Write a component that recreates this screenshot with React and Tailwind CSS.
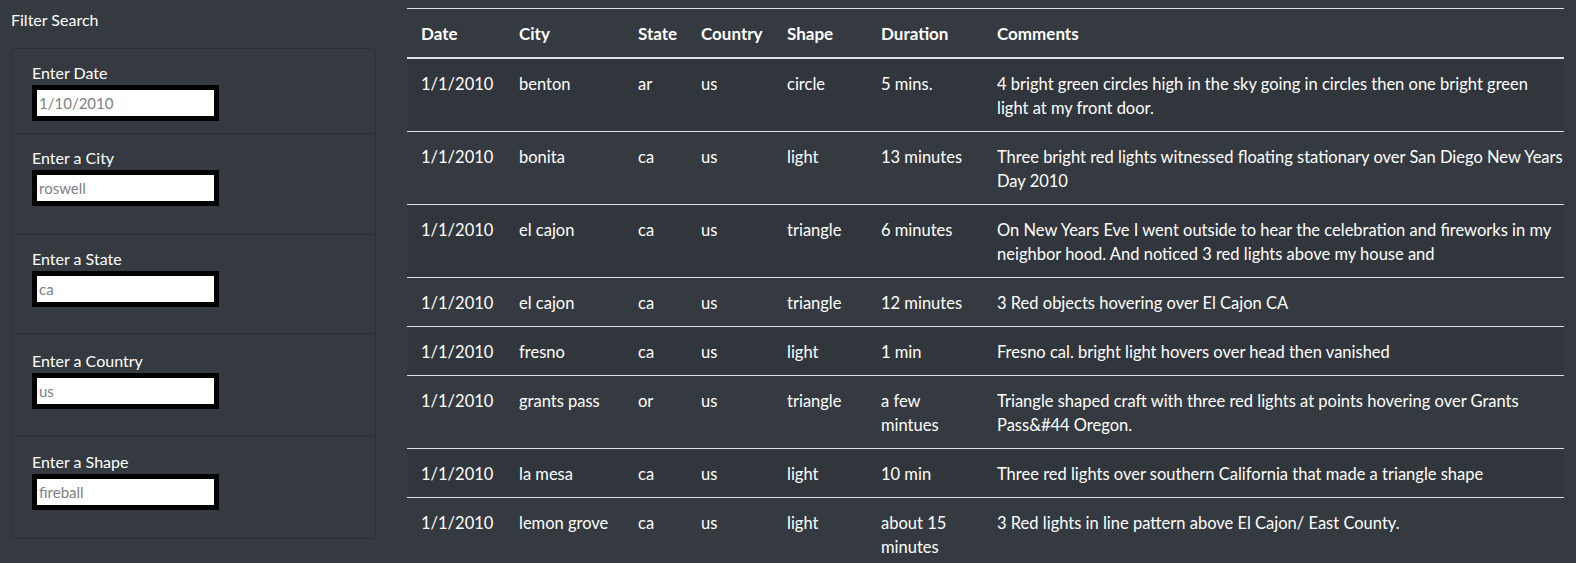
import React from "react";

const filters = [
  { label: "Enter Date", ph: "1/10/2010", h: "h-[85px]", pt: "pt-3" },
  { label: "Enter a City", ph: "roswell", h: "h-[101px]", pt: "pt-3" },
  { label: "Enter a State", ph: "ca", h: "h-[99px]", pt: "pt-3" },
  { label: "Enter a Country", ph: "us", h: "h-[103px]", pt: "pt-[15px]" },
  { label: "Enter a Shape", ph: "fireball", h: "h-[101px]", pt: "pt-[13px]" },
];

const rows = [
  ["1/1/2010", "benton", "ar", "us", "circle", ["5 mins."], ["4 bright green circles high in the sky going in circles then one bright green", "light at my front door."]],
  ["1/1/2010", "bonita", "ca", "us", "light", ["13 minutes"], ["Three bright red lights witnessed floating stationary over San Diego New Years", "Day 2010"]],
  ["1/1/2010", "el cajon", "ca", "us", "triangle", ["6 minutes"], ["On New Years Eve I went outside to hear the celebration and fireworks in my", "neighbor hood. And noticed 3 red lights above my house and"]],
  ["1/1/2010", "el cajon", "ca", "us", "triangle", ["12 minutes"], ["3 Red objects hovering over El Cajon CA"]],
  ["1/1/2010", "fresno", "ca", "us", "light", ["1 min"], ["Fresno cal. bright light hovers over head then vanished"]],
  ["1/1/2010", "grants pass", "or", "us", "triangle", ["a few", "mintues"], ["Triangle shaped craft with three red lights at points hovering over Grants", "Pass&#44 Oregon."]],
  ["1/1/2010", "la mesa", "ca", "us", "light", ["10 min"], ["Three red lights over southern California that made a triangle shape"]],
  ["1/1/2010", "lemon grove", "ca", "us", "light", ["about 15", "minutes"], ["3 Red lights in line pattern above El Cajon/ East County."]],
];

const heads = [
  ["Date", "w-[98px]"],
  ["City", "w-[119px]"],
  ["State", "w-[63px]"],
  ["Country", "w-[86px]"],
  ["Shape", "w-[94px]"],
  ["Duration", "w-[116px]"],
  ["Comments", "w-[581px]"],
];

function Lines({ lines }) {
  return lines.map((l, i) => (
    <React.Fragment key={i}>
      {i > 0 && <br />}
      {l}
    </React.Fragment>
  ));
}

export default function App() {
  return (
    <div
      className="min-h-[563px] w-[1576px] overflow-hidden bg-[#343a40] text-white text-[16px] leading-6"
      style={{ fontFamily: "Lato, 'Open Sans', Arial, sans-serif" }}
    >
      <div className="flex">
        <div className="w-[407px] shrink-0 pl-[11px]">
          <div className="pt-[8px] h-[48px] text-[16px] leading-6">Filter Search</div>
          <div className="w-[365px] rounded border border-[#2c3136] flex flex-col">
            {filters.map((f, i) => (
              <div
                key={f.label}
                className={`${f.h} ${f.pt} px-5 ${i < filters.length - 1 ? "border-b border-[#2c3136]" : ""}`}
              >
                <div className="leading-6">{f.label}</div>
                <input
                  placeholder={f.ph}
                  className="block w-[187px] h-[36px] border-[5px] border-black bg-white px-[2px] text-[15px] text-black placeholder:text-[#808080] outline-none"
                  style={{ fontFamily: "Lato, 'Open Sans', Arial, sans-serif" }}
                />
              </div>
            ))}
          </div>
        </div>
        <div className="pt-[8px]">
          <table className="w-[1157px] table-fixed border-collapse text-[16.5px]">
            <thead>
              <tr className="border-t border-[#dee2e6] border-b-2">
                {heads.map(([h, w]) => (
                  <th key={h} className={`${w} text-left font-bold text-[17px] pl-[14px] pr-2 pt-[13px] pb-[11px] leading-6`}>
                    {h}
                  </th>
                ))}
              </tr>
            </thead>
            <tbody>
              {rows.map((r, i) => (
                <tr
                  key={i}
                  className={`border-t border-[#dee2e6] ${i % 2 === 0 ? "bg-[#31363c]" : ""}`}
                >
                  {r.map((c, j) => (
                    <td key={j} className="pl-[14px] pr-2 pt-[13px] pb-[11px] align-top leading-6 whitespace-nowrap">
                      {Array.isArray(c) ? <Lines lines={c} /> : c}
                    </td>
                  ))}
                </tr>
              ))}
            </tbody>
          </table>
        </div>
      </div>
    </div>
  );
}
